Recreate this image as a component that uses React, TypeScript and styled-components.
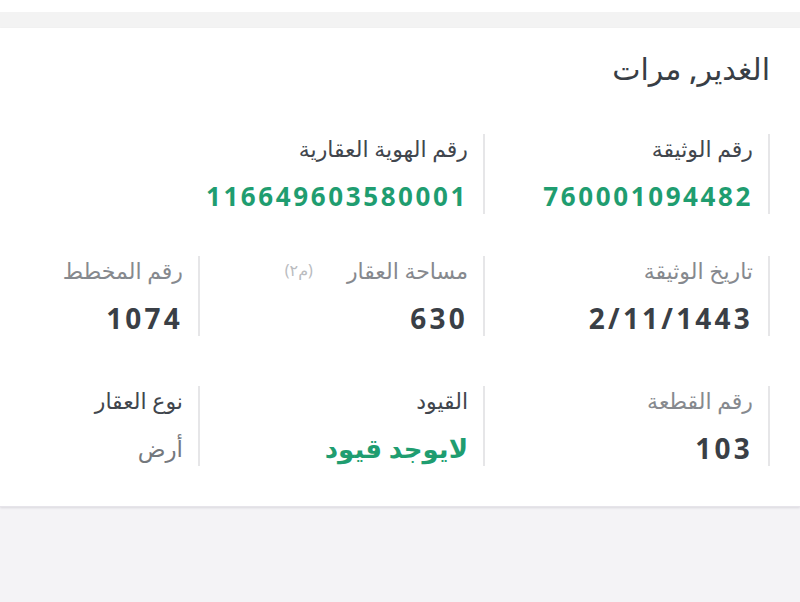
import React from "react";
import styled, { createGlobalStyle } from "styled-components";

const GlobalStyle = createGlobalStyle`
  html, body {
    margin: 0;
    padding: 0;
    background: #f4f3f6;
  }
  body {
    font-family: "Noto Sans", "DejaVu Sans", sans-serif;
  }
`;

type Tone = "green" | "dark" | "muted";

type Field = {
  label: string;
  value: string;
  tone?: Tone;
  labelTone?: "dark" | "light";
  unit?: string;
};

const rows: { top: number; fields: Field[] }[] = [
  {
    top: 44,
    fields: [
      { label: "رقم الوثيقة", value: "760001094482", tone: "green", labelTone: "dark" },
      { label: "رقم الهوية العقارية", value: "116649603580001", tone: "green", labelTone: "dark" },
    ],
  },
  {
    top: 42,
    fields: [
      { label: "تاريخ الوثيقة", value: "2/11/1443", labelTone: "light" },
      { label: "مساحة العقار", value: "630", labelTone: "light", unit: "(م٢)" },
      { label: "رقم المخطط", value: "1074", labelTone: "light" },
    ],
  },
  {
    top: 50,
    fields: [
      { label: "رقم القطعة", value: "103", labelTone: "light" },
      { label: "القيود", value: "لايوجد قيود", tone: "green", labelTone: "dark" },
      { label: "نوع العقار", value: "أرض", tone: "muted", labelTone: "dark" },
    ],
  },
];

const App = () => {
  return (
    <>
      <GlobalStyle />
      <Page>
        <TopGap />
        <Band />
        <Card>
          <Title>الغدير, مرات</Title>
          {rows.map((row, i) => (
            <Row key={i} $top={row.top}>
              {row.fields.map((f) => (
                <Item key={f.label}>
                  <LabelLine>
                    <Label $tone={f.labelTone}>{f.label}</Label>
                    {f.unit && <Unit>{f.unit}</Unit>}
                  </LabelLine>
                  <Value $tone={f.tone ?? "dark"}>{f.value}</Value>
                </Item>
              ))}
            </Row>
          ))}
        </Card>
      </Page>
    </>
  );
};

export default App;

const Page = styled.div`
  direction: rtl;
  min-height: 602px;
  background: #f4f3f6;
`;

const TopGap = styled.div`
  height: 12px;
  background: #ffffff;
`;

const Band = styled.div`
  height: 16px;
  background: #f3f3f3;
`;

const Card = styled.div`
  background: #ffffff;
  padding: 20px 30px 40px;
  box-shadow: 0 1px 2px rgba(40, 30, 60, 0.12);
  border-bottom: 1px solid #e6e4ea;
`;

const Title = styled.h1`
  margin: 0;
  font-size: 30px;
  line-height: 42px;
  font-weight: 500;
  color: #383e45;
`;

const Row = styled.div<{ $top: number }>`
  display: grid;
  grid-template-columns: repeat(3, 285px);
  margin-top: ${(p) => p.$top}px;
`;

const Item = styled.div`
  display: flex;
  flex-direction: column;
  gap: 16px;
  padding-right: 15px;
  border-right: 2px solid #e6e6e8;
`;

const LabelLine = styled.div`
  display: flex;
  align-items: center;
  gap: 34px;
`;

const Label = styled.span<{ $tone?: "dark" | "light" }>`
  font-size: 22px;
  line-height: 28px;
  color: ${(p) => (p.$tone === "light" ? "#86898e" : "#41464d")};
`;

const Unit = styled.span`
  font-size: 16px;
  line-height: 28px;
  color: #babcbf;
`;

const valueSize: Record<Tone, string> = { green: "26px", dark: "28px", muted: "23px" };
const valueSpacing: Record<Tone, string> = { green: "2.6px", dark: "3.2px", muted: "0" };
const valueColor: Record<Tone, string> = { green: "#1f9d70", dark: "#3a3f46", muted: "#74787d" };

const Value = styled.span<{ $tone: Tone }>`
  font-size: ${(p) => valueSize[p.$tone]};
  line-height: 36px;
  font-weight: ${(p) => (p.$tone === "muted" ? 400 : 700)};
  letter-spacing: ${(p) => valueSpacing[p.$tone]};
  color: ${(p) => valueColor[p.$tone]};
`;
